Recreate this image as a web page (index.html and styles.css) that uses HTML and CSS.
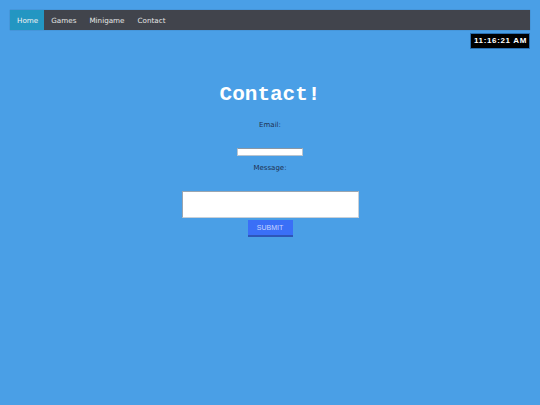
FILE: index.html
```html
<!DOCTYPE html>
<html>
<head>
<meta charset="utf-8">
<title>Contact</title>
<link rel="stylesheet" href="styles.css">
</head>
<body>
<nav class="topnav">
  <a class="nav-link active" href="#">Home</a>
  <a class="nav-link" href="#">Games</a>
  <a class="nav-link" href="#">Minigame</a>
  <a class="nav-link" href="#">Contact</a>
</nav>
<div class="clock-row">
  <div class="clock">11:16:21 AM</div>
</div>
<main class="contact">
  <h1 class="title">Contact!</h1>
  <form class="contact-form">
    <label class="field-label">Email:</label>
    <input class="email-input" type="text">
    <label class="field-label msg-label">Message:</label>
    <textarea class="message-input"></textarea>
    <button class="submit-btn" type="button">SUBMIT</button>
  </form>
</main>
</body>
</html>
```
FILE: styles.css
```css
html, body {
  margin: 0;
  padding: 0;
}
body {
  background: #4a9fe6;
  padding: 10px 10px 0 10px;
  font-family: "DejaVu Sans", Verdana, sans-serif;
}
.topnav {
  display: flex;
  height: 20px;
  background: #41444c;
  box-shadow: 0 0 1px rgba(0,0,0,0.3);
}
.nav-link {
  display: flex;
  align-items: center;
  padding: 0 6px 0 7px;
  font-size: 7.2px;
  color: #e6e6e6;
  text-decoration: none;
}
.active {
  background: #2396c2;
  color: #f2f2f2;
}
.clock-row {
  display: flex;
  justify-content: flex-end;
  margin-top: 3px;
}
.clock {
  background: #000;
  color: #fff;
  border: 1px solid #2a6fb0;
  font-family: "Liberation Sans", Arial, sans-serif;
  font-weight: bold;
  font-size: 8px;
  letter-spacing: 0.65px;
  height: 14px;
  line-height: 14px;
  padding: 0 2px 0 3px;
}
.contact {
  display: flex;
  flex-direction: column;
  align-items: center;
}
.title {
  margin: 34px 0 0 0;
  font-family: "Liberation Mono", "Courier New", monospace;
  font-weight: bold;
  font-size: 21px;
  line-height: 24px;
  color: #fff;
}
.contact-form {
  display: flex;
  flex-direction: column;
  align-items: center;
}
.field-label {
  font-size: 7px;
  color: #1d3050;
  margin-top: 13px;
  line-height: 10px;
}
.email-input {
  margin-top: 18px;
  width: 66px;
  height: 8px;
  box-sizing: border-box;
  border: 1px solid #b8c4d0;
  border-top-color: #8a97a5;
  background: #fff;
  padding: 0;
}
.msg-label {
  margin-top: 7px;
}
.message-input {
  margin-top: 18px;
  width: 177px;
  height: 27px;
  box-sizing: border-box;
  border: 1px solid #c8d0d8;
  border-top-color: #9aa5b0;
  border-left-color: #9aa5b0;
  background: #fff;
  padding: 0;
  resize: none;
}
.submit-btn {
  margin-top: 2px;
  width: 45px;
  height: 17px;
  border: none;
  border-bottom: 2px solid #2e55b8;
  background: #3a6ff7;
  color: #c8d6ff;
  font-family: "Liberation Sans", Arial, sans-serif;
  font-size: 7px;
  padding: 0;
}
```
